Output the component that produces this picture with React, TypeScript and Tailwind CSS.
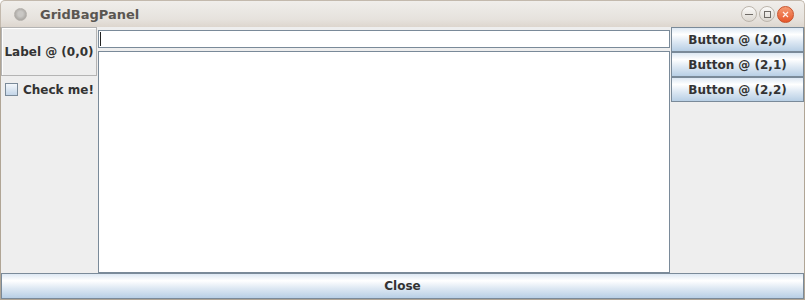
import React from "react";

const btnBg =
  "bg-[linear-gradient(to_bottom,#dde8f3_0%,#ffffff_28%,#dde8f3_60%,#b8cfe5_100%)]";

function JButton({ label, className = "" }: { label: string; className?: string }) {
  return (
    <div
      className={`flex items-center justify-center border border-[#7a8a99] ${btnBg} text-[12px] font-bold text-[#333333] ${className}`}
    >
      {label}
    </div>
  );
}

export default function App() {
  return (
    <div
      className="w-[805px] h-[300px] bg-white overflow-hidden"
      style={{ fontFamily: '"DejaVu Sans", "Liberation Sans", sans-serif' }}
    >
      {/* Title bar */}
      <div className="h-[27px] rounded-t-[5px] bg-[linear-gradient(to_bottom,#f0eeeb,#e6e2dd_70%,#ddd6ce)] border-x border-t border-[#c3b9ad] flex items-center">
        <div className="ml-[13px] w-[13px] h-[13px] rounded-full bg-[radial-gradient(circle_at_50%_45%,#c9c7c4_30%,#a9a6a2_75%)] border border-[#b4b0ab]" />
        <div className="ml-[13px] text-[13px] font-bold text-[#5a5652] leading-none">GridBagPanel</div>
        <div className="ml-auto mr-[10px] flex items-center gap-[2px]">
          <div className="w-[16px] h-[16px] rounded-full border border-[#bcb5ac] bg-[linear-gradient(to_bottom,#fbfaf9,#dcd7d0)] flex items-center justify-center">
            <div className="w-[8px] h-[1px] bg-[#6f6b66]" />
          </div>
          <div className="w-[16px] h-[16px] rounded-full border border-[#bcb5ac] bg-[linear-gradient(to_bottom,#fbfaf9,#dcd7d0)] flex items-center justify-center">
            <div className="w-[7px] h-[7px] border border-[#6f6b66]" />
          </div>
          <div className="w-[17px] h-[17px] rounded-full border border-[#c8512a] bg-[linear-gradient(to_bottom,#f59a72,#e7572a)] flex items-center justify-center">
            <svg width="7" height="7" viewBox="0 0 7 7">
              <path d="M1 1 L6 6 M6 1 L1 6" stroke="#fff3ee" strokeWidth="1.2" />
            </svg>
          </div>
        </div>
      </div>

      {/* Body */}
      <div className="h-[273px] bg-[#eeeeee] border-x border-b border-[#b0a595] flex flex-col">
        <div className="h-[246px] flex">
          {/* column 0 */}
          <div className="w-[97px] flex flex-col">
            <div className="w-[96px] h-[49px] border border-[#b4b4b4] shadow-[inset_1px_1px_0_#ffffff] flex items-center justify-center text-[12px] font-bold text-[#333333]">
              Label @ (0,0)
            </div>
            <div className="h-[26px] flex items-center pl-[4px] pt-[1px]">
              <div className="w-[13px] h-[13px] border border-[#7a8a99] bg-[linear-gradient(to_bottom,#f3f7fb,#c3d5e8)]" />
              <span className="ml-[5px] text-[12px] font-bold text-[#333333]">Check me!</span>
            </div>
          </div>
          {/* column 1 */}
          <div className="w-[572px] flex flex-col">
            <div className="mt-[3px] h-[18px] border border-[#7a8a99] bg-white flex items-center">
              <div className="ml-[1px] w-[1px] h-[14px] bg-[#222222]" />
            </div>
            <div className="mt-[3px] h-[222px] border border-[#7a8a99] bg-white" />
          </div>
          {/* column 2 */}
          <div className="ml-[1px] flex-1 flex flex-col">
            <JButton label="Button @ (2,0)" className="h-[25px]" />
            <JButton label="Button @ (2,1)" className="h-[25px]" />
            <JButton label="Button @ (2,2)" className="h-[25px]" />
          </div>
        </div>
        <JButton label="Close" className="h-[26px]" />
      </div>
    </div>
  );
}
